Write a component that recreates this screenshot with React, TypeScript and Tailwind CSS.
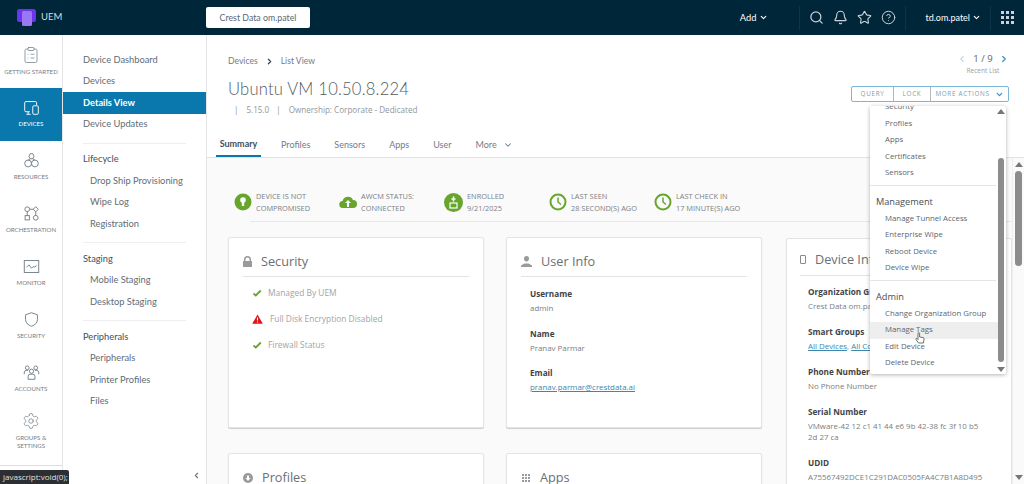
import {
  Bell,
  ChevronDown,
  ChevronLeft,
  ChevronRight,
  CircleHelp,
  ClipboardList,
  Search,
  Settings,
  Star,
} from 'lucide-react'
import type { ReactNode } from 'react'

const sans = "font-['Lato','Open_Sans',sans-serif]"
const body = "font-['Open_Sans',sans-serif]"

function RailIcon({ name }: { name: string }) {
  const common = {
    width: 17,
    height: 17,
    viewBox: '0 0 20 20',
    fill: 'none',
    stroke: 'currentColor',
    strokeWidth: 1.1,
  }
  if (name === 'devices')
    return (
      <svg {...common}>
        <path d="M8 15H3.500a1.500 1.500 0 0 1-1.500-1.500V4.500A1.500 1.500 0 0 1 3.500 3h11A1.500 1.500 0 0 1 16 4.500V7" />
        <rect x="11.500" y="8" width="6.500" height="10" rx="1.200" />
        <path d="M4 18h5M6 15v3" />
      </svg>
    )
  if (name === 'resources')
    return (
      <svg {...common}>
        <path d="M7 5l1.500-3h3L13 5l-1.500 3h-3z" />
        <circle cx="6" cy="13.500" r="4" />
        <circle cx="14" cy="13.500" r="4" />
        <path d="M6 9.500l2.500-1.500M14 9.500L11.500 8" />
      </svg>
    )
  if (name === 'orchestration')
    return (
      <svg {...common}>
        <circle cx="5" cy="5" r="2.800" />
        <path d="M15 2l3 3-3 3-3-3z" />
        <rect x="2.500" y="12.500" width="5" height="5" />
        <circle cx="15" cy="15" r="2.800" />
        <path d="M5 7.800v4.700M15 8v4.200M7.800 5H12" />
      </svg>
    )
  if (name === 'monitor')
    return (
      <svg {...common}>
        <rect x="1.500" y="3" width="17" height="14" />
        <path d="M4 11l3-3 3 4 2-2 1 1 3-2" />
      </svg>
    )
  if (name === 'security')
    return (
      <svg {...common}>
        <path d="M10 2l7 2.500V10c0 4-3 6.500-7 8-4-1.500-7-4-7-8V4.500z" />
      </svg>
    )
  if (name === 'accounts')
    return (
      <svg {...common}>
        <circle cx="10" cy="8.500" r="2.500" />
        <path d="M6 18v-3.500a2.500 2.500 0 0 1 2.500-2.500h3a2.500 2.500 0 0 1 2.500 2.500V18z" />
        <circle cx="5" cy="4.500" r="2.200" />
        <circle cx="15" cy="4.500" r="2.200" />
        <path d="M1.500 12V9.500A2.500 2.500 0 0 1 4 7.500h2M18.500 12V9.500A2.500 2.500 0 0 0 16 7.500h-2" />
      </svg>
    )
  return <Settings size={18} strokeWidth={1} />
}

function RailItem({
  label,
  icon,
  active,
  tight,
}: {
  label: string
  icon: ReactNode
  active?: boolean
  tight?: boolean
}) {
  return (
    <div
      className={`h-[53px] flex flex-col items-center shrink-0 ${
        tight ? 'pt-[6px]' : 'pt-[11px]'
      } ${active ? 'bg-[#0b78ad] text-white' : 'text-[#737d85]'}`}
    >
      {icon}
      <span
        className={`${sans} mt-[4px] text-[6.100px] leading-[8px] text-center whitespace-pre-line`}
      >
        {label}
      </span>
    </div>
  )
}

function SubLink({
  label,
  indent,
  active,
}: {
  label: string
  indent?: boolean
  active?: boolean
}) {
  return (
    <div
      className={`${sans} h-[21.500px] flex items-center text-[9.300px] ${
        indent ? 'pl-[27px]' : 'pl-[20px]'
      } ${active ? 'bg-[#0b78ad] text-white font-bold' : 'text-[#626c75]'}`}
    >
      {label}
    </div>
  )
}

function SubHeading({ label }: { label: string }) {
  return (
    <div className={`${sans} pl-[20px] h-[21.500px] flex items-center text-[9.300px] text-[#454f58]`}>
      {label}
    </div>
  )
}

function SubDivider() {
  return <div className="mx-[20px] h-px bg-[#eeeeee] mt-[7.500px] mb-[5px]" />
}

function StatusItem({
  icon,
  top,
  bottom,
}: {
  icon: ReactNode
  top: string
  bottom: string
}) {
  return (
    <div className="flex items-center gap-[4px] w-[105px] shrink-0">
      {icon}
      <div className={`${body} text-[7.400px] leading-[12px] text-[#7c8085]`}>
        <div>{top}</div>
        <div>{bottom}</div>
      </div>
    </div>
  )
}

function ClockIcon() {
  return (
    <svg width="18" height="18" viewBox="0 0 18 18" fill="none" stroke="#68a52d" strokeWidth="2">
      <circle cx="9" cy="9" r="7.500" />
      <path d="M9 4.500V9l3 2.500" strokeWidth="1.500" />
    </svg>
  )
}

function Card({
  title,
  icon,
  height,
  iconSlot,
  children,
}: {
  title: string
  icon: ReactNode
  height: string
  iconSlot: string
  children?: ReactNode
}) {
  return (
    <div
      className={`w-[256px] ${height} shrink-0 bg-white border border-[#e4e4e4] rounded-[2px] shadow-[0_1px_1px_rgba(0,0,0,0.18)] px-[14px]`}
    >
      <div className="h-[39px] pt-[9px] flex items-center gap-[9px] border-b border-[#e3e3e3]">
        <span className={`text-[#9a9a9a] ${iconSlot} flex justify-center`}>{icon}</span>
        <span className={`${body} text-[12.700px] text-[#6b6f73]`}>{title}</span>
      </div>
      {children}
    </div>
  )
}

function SecurityRow({ ok, label }: { ok: boolean; label: string }) {
  return (
    <div className="h-[26px] flex items-center pl-[9px]">
      {ok ? (
        <svg width="10" height="10" viewBox="0 0 10 10" className="mr-[6px]">
          <path d="M1.500 5.500l2.300 2 5-5" fill="none" stroke="#68a52d" strokeWidth="1.800" />
        </svg>
      ) : (
        <svg width="11" height="10" viewBox="0 0 11 10" className="mr-[7px]">
          <path d="M5.500 0.500L10.800 9.800H.2z" fill="#e0121a" />
          <path d="M5.500 3.500v3M5.500 7.500v1" stroke="#fff" strokeWidth="1.100" />
        </svg>
      )}
      <span className={`${body} text-[8.400px] text-[#a0a4a8]`}>{label}</span>
    </div>
  )
}

function Field({
  label,
  children,
  gap,
}: {
  label: string
  children: ReactNode
  gap: string
}) {
  return (
    <div className={`${body} ${gap}`}>
      <div className="font-bold text-[8.200px] leading-[12px] text-[#3f4347] mb-[3px]">{label}</div>
      <div className="text-[7.900px] leading-[11px] text-[#7a7e82]">{children}</div>
    </div>
  )
}

function MenuLink({ label, hover }: { label: string; hover?: boolean }) {
  return (
    <div
      className={`${body} h-[16.500px] flex items-center pl-[15px] text-[7.800px] text-[#5c6670] ${
        hover ? 'bg-[#eeeeee] mr-[-2px]' : ''
      }`}
    >
      {label}
    </div>
  )
}

function MenuHeading({ label }: { label: string }) {
  return (
    <div className={`${body} h-[17px] flex items-center pl-[6px] text-[9.200px] text-[#454f58]`}>
      {label}
    </div>
  )
}

export default function App() {
  return (
    <div className={`${body} relative w-[1024px] h-[484px] overflow-hidden flex flex-col bg-white`}>
      <header className="h-[35px] shrink-0 bg-[#00263a] flex items-center text-white">
        <div className="w-[206px] flex items-center pl-[17px] shrink-0">
          <svg width="19" height="17" viewBox="0 0 19 17">
            <rect x="0" y="0" width="19" height="13" rx="2.500" fill="#6d34ee" />
            <rect x="5" y="2" width="10" height="15" rx="1.500" fill="#9a78f5" />
          </svg>
          <span className={`${sans} ml-[5px] text-[9.500px] text-[#d5dde2]`}>UEM</span>
        </div>
        <div className={`${sans} w-[104px] h-[21px] bg-white rounded-[2px] flex items-center justify-center text-[8.800px] text-[#5c6670]`}>
          Crest Data om.patel
        </div>
        <div className="flex-1" />
        <div className={`${sans} flex items-center text-[9.300px] mr-[31px]`}>
          Add <ChevronDown size={9} strokeWidth={3} className="ml-[3px]" />
        </div>
        <div className="w-px h-[24px] bg-[#0e3648]" />
        <div className="flex items-center gap-[9px] px-[9px] text-[#c9d2d8]">
          <Search size={15} strokeWidth={2} />
          <Bell size={15} strokeWidth={1.800} />
          <Star size={15} strokeWidth={1.800} />
          <CircleHelp size={15} strokeWidth={1.600} />
        </div>
        <div className="w-px h-[24px] bg-[#0e3648]" />
        <div className={`${sans} flex items-center text-[9px] pl-[19px] pr-[9px]`}>
          td.om.patel <ChevronDown size={9} strokeWidth={3} className="ml-[2px]" />
        </div>
        <div className="w-px h-[24px] bg-[#0e3648]" />
        <div className="grid grid-cols-3 gap-[2px] pl-[10px] pr-[10px]">
          {Array.from({ length: 9 }).map((_, i) => (
            <span key={i} className="w-[3px] h-[3px] bg-[#c9d2d8]" />
          ))}
        </div>
      </header>

      <div className="flex-1 min-h-0 flex">
        <aside className="w-[63px] shrink-0 border-r border-[#e6e6e6] bg-white flex flex-col">
          <RailItem label="GETTING STARTED" icon={<ClipboardList size={18} strokeWidth={1} />} />
          <RailItem active label="DEVICES" icon={<RailIcon name="devices" />} />
          <RailItem label="RESOURCES" icon={<RailIcon name="resources" />} />
          <RailItem label="ORCHESTRATION" icon={<RailIcon name="orchestration" />} />
          <RailItem label="MONITOR" icon={<RailIcon name="monitor" />} />
          <RailItem label="SECURITY" icon={<RailIcon name="security" />} />
          <RailItem label="ACCOUNTS" icon={<RailIcon name="accounts" />} />
          <RailItem tight label={'GROUPS &\nSETTINGS'} icon={<RailIcon name="settings" />} />
          <div className="border-t border-[#dddddd] mt-[6px]" />
        </aside>

        <nav className="w-[144px] shrink-0 border-r border-[#e6e6e6] bg-white pt-[14px] relative">
          <SubLink label="Device Dashboard" />
          <SubLink label="Devices" />
          <SubLink active label="Details View" />
          <SubLink label="Device Updates" />
          <SubDivider />
          <SubHeading label="Lifecycle" />
          <SubLink indent label="Drop Ship Provisioning" />
          <SubLink indent label="Wipe Log" />
          <SubLink indent label="Registration" />
          <SubDivider />
          <SubHeading label="Staging" />
          <SubLink indent label="Mobile Staging" />
          <SubLink indent label="Desktop Staging" />
          <SubDivider />
          <SubHeading label="Peripherals" />
          <SubLink indent label="Peripherals" />
          <SubLink indent label="Printer Profiles" />
          <SubLink indent label="Files" />
          <ChevronLeft size={9} strokeWidth={3} className="absolute right-[5px] bottom-[4px] text-[#6b7780]" />
        </nav>

        <main className="flex-1 min-w-0 flex flex-col overflow-hidden bg-[#fafafa]">
          <section className="h-[123px] shrink-0 bg-white border-b border-[#e3e3e3] flex flex-col pl-[21px] pr-[15px]">
            <div className="flex justify-between pt-[14px] h-[42px]">
              <div className={`${sans} flex items-center h-[24px] text-[8.600px] text-[#747c84]`}>
                Devices
                <ChevronRight size={9} strokeWidth={3.500} className="mx-[7px] text-[#3f4a52]" />
                List View
              </div>
              <div className="w-[52px] text-center mt-[3px]">
                <div className="flex items-center justify-between text-[9.500px] leading-[14px] text-[#5c6670]">
                  <ChevronLeft size={10} strokeWidth={2.500} className="text-[#a9cde6]" />
                  1 / 9
                  <ChevronRight size={10} strokeWidth={3} className="text-[#3d8fd0]" />
                </div>
                <div className="text-[6.500px] leading-[10px] text-[#9a9ea2]">Recent List</div>
              </div>
            </div>
            <div className="flex justify-between h-[25px]">
              <h1 className={`${sans} text-[16.600px] font-light leading-[25px] text-[#555b61] tracking-[0.2px]`}>
                Ubuntu VM 10.50.8.224
              </h1>
              <div className="flex h-[16px] mt-[9px] border border-[#79b7d6] rounded-[2px] text-[6.300px] tracking-[0.7px] text-[#7f9bb0] bg-white">
                <span className="w-[41px] flex items-center justify-center">QUERY</span>
                <span className="w-[37px] flex items-center justify-center border-l border-[#b7b7b7]">LOCK</span>
                <span className="w-[78px] flex items-center justify-center gap-[5px] border-l border-[#b7b7b7]">
                  MORE ACTIONS
                  <ChevronDown size={9} strokeWidth={3.500} className="text-[#3d8fd0]" />
                </span>
              </div>
            </div>
            <div className="text-[8.100px] leading-[12px] mt-[2px] text-[#93979b]">
              <span className="ml-[6px]">|</span>
              <span className="ml-[8px]">5.15.0</span>
              <span className="ml-[7px]">|</span>
              <span className="ml-[8px]">Ownership: Corporate - Dedicated</span>
            </div>
            <div className={`${sans} flex mt-auto ml-[-12px] text-[9px] text-[#747c84]`}>
              <span className="h-[27px] w-[45px] pt-[2px] flex items-center justify-center font-bold text-[#454f58] border-b-2 border-[#0b78ad]">
                Summary
              </span>
              <span className="h-[27px] pt-[2px] flex items-center ml-[20px]">Profiles</span>
              <span className="h-[27px] pt-[2px] flex items-center ml-[24px]">Sensors</span>
              <span className="h-[27px] pt-[2px] flex items-center ml-[24px]">Apps</span>
              <span className="h-[27px] pt-[2px] flex items-center ml-[24px]">User</span>
              <span className="h-[27px] pt-[2px] flex items-center ml-[24px]">
                More
                <ChevronDown size={10} strokeWidth={2.500} className="ml-[6px]" />
              </span>
            </div>
          </section>

          <div className="flex-1 min-h-0 pl-[21px] overflow-hidden">
            <div className="ml-[22px] h-[64px] pt-[32px] border-b border-[#e8e8e8]">
              <div className="flex ml-[-16px] items-center h-[24px]">
                <StatusItem
                  top="DEVICE IS NOT"
                  bottom="COMPROMISED"
                  icon={
                    <svg width="18" height="18" viewBox="0 0 18 18">
                      <circle cx="9" cy="9" r="8.500" fill="#68a52d" />
                      <circle cx="9" cy="7" r="2.800" fill="#fff" />
                      <path d="M7.800 8h2.400v5H7.800z" fill="#fff" />
                    </svg>
                  }
                />
                <StatusItem
                  top="AWCM STATUS:"
                  bottom="CONNECTED"
                  icon={
                    <svg width="18" height="14" viewBox="0 0 18 14">
                      <path d="M4 13a3.500 3.500 0 0 1-.4-7A5.500 5.500 0 0 1 14 5a4 4 0 0 1 0 8z" fill="#68a52d" />
                      <path d="M9 5L6 8h2v4h2V8h2z" fill="#fff" />
                    </svg>
                  }
                />
                <StatusItem
                  top="ENROLLED"
                  bottom="9/21/2025"
                  icon={
                    <svg width="19" height="19" viewBox="0 0 19 19">
                      <circle cx="9.500" cy="9.500" r="9.500" fill="#68a52d" />
                      <path d="M9.500 3.500v5M7.500 6h4" stroke="#fff" strokeWidth="1.500" />
                      <rect x="6" y="10" width="7" height="5" fill="none" stroke="#fff" strokeWidth="1.200" />
                    </svg>
                  }
                />
                <StatusItem top="LAST SEEN" bottom="28 SECOND(S) AGO" icon={<ClockIcon />} />
                <StatusItem top="LAST CHECK IN" bottom="17 MINUTE(S) AGO" icon={<ClockIcon />} />
              </div>
            </div>

            <div className="flex gap-[22px] mt-[15px]">
              <Card
                title="Security"
                height="h-[191px]"
                iconSlot="w-[9px]"
                icon={
                  <svg width="9" height="11" viewBox="0 0 9 11" fill="currentColor">
                    <path d="M1 5V3.500a3.500 3.500 0 0 1 7 0V5h1v6H0V5zm1.500 0h4V3.500a2 2 0 0 0-4 0z" />
                  </svg>
                }
              >
                <div className="pt-[3px]">
                  <SecurityRow ok label="Managed By UEM" />
                  <SecurityRow ok={false} label="Full Disk Encryption Disabled" />
                  <SecurityRow ok label="Firewall Status" />
                </div>
              </Card>
              <Card
                title="User Info"
                height="h-[191px]"
                iconSlot="w-[11px]"
                icon={
                  <svg width="11" height="11" viewBox="0 0 11 11" fill="currentColor">
                    <path d="M3 2.500a2.500 2.500 0 0 1 5 0c0 1.500-.6 3-2.500 3S3 4 3 2.500zM0 11V9.500l3.500-2h4l3.500 2V11z" />
                  </svg>
                }
              >
                <div className="pt-[11px] pl-[9px]">
                  <Field label="Username" gap="mb-[13.500px]">admin</Field>
                  <Field label="Name" gap="mb-[13.500px]">Pranav Parmar</Field>
                  <Field label="Email" gap="mb-0">
                    <span className="text-[#3c87ae] underline">pranav.parmar@crestdata.ai</span>
                  </Field>
                </div>
              </Card>
            </div>

            <div className="flex gap-[22px] mt-[25px]">
              <Card
                title="Profiles"
                height="h-[80px]"
                iconSlot="w-[10px]"
                icon={
                  <svg width="10" height="10" viewBox="0 0 10 10" fill="currentColor">
                    <circle cx="5" cy="5" r="5" />
                    <path d="M5 8L2.500 5H4V2.500h2V5h1.500z" fill="#fff" />
                  </svg>
                }
              />
              <Card
                title="Apps"
                height="h-[80px]"
                iconSlot="w-[10px]"
                icon={
                  <span className="grid grid-cols-3 gap-[1px]">
                    {Array.from({ length: 9 }).map((_, i) => (
                      <span key={i} className="w-[2px] h-[2px] bg-[#9a9a9a]" />
                    ))}
                  </span>
                }
              />
            </div>
          </div>
        </main>
      </div>

      {/* device info card is cut by the page scrollbar */}
      <div className="absolute left-[786px] top-[238px] w-[226px] h-[260px] bg-white border border-[#e4e4e4] rounded-[2px] shadow-[0_1px_1px_rgba(0,0,0,0.18)] px-[13px]">
        <div className="h-[37px] pt-[5px] flex items-center gap-[9px] border-b border-[#e3e3e3]">
          <span className="w-[6px] h-[9px] border border-[#8a8a8a] rounded-[1px]" />
          <span className="text-[12.700px] text-[#6b6f73]">Device Info</span>
        </div>
        <div className="pt-[10px] pl-[8px] pr-[10px]">
          <Field label="Organization Group" gap="mb-[14px]">Crest Data om.patel</Field>
          <Field label="Smart Groups" gap="mb-[14px]">
            <span className="text-[#3c87ae] underline">All Devices</span>,{' '}
            <span className="text-[#3c87ae] underline">All Corporate</span>
          </Field>
          <Field label="Phone Number" gap="mb-[14px]">No Phone Number</Field>
          <Field label="Serial Number" gap="mb-[14px]">
            VMware-42 12 c1 41 44 e6 9b 42-38 fc 3f 10 b5 2d 27 ca
          </Field>
          <Field label="UDID" gap="mb-0">A75567492DCE1C291DAC0505FA4C7B1A8D495</Field>
        </div>
      </div>

      {/* page scrollbar */}
      <div className="absolute right-0 top-[158px] bottom-0 w-[12px] bg-[#fafafa] border-l border-[#eeeeee]">
        <div className="absolute top-[4px] left-[2px] w-0 h-0 border-x-[4px] border-x-transparent border-b-[5px] border-b-[#777777]" />
        <div className="absolute top-[13px] left-[2px] w-[7px] h-[95px] rounded-[4px] bg-[#8c8c8c]" />
        <div className="absolute bottom-[4px] left-[2px] w-0 h-0 border-x-[4px] border-x-transparent border-t-[5px] border-t-[#777777]" />
      </div>

      {/* more actions dropdown */}
      <div className="absolute left-[870px] top-[106px] w-[136px] h-[268px] bg-white rounded-[2px] shadow-[0_1px_4px_rgba(0,0,0,0.3)] overflow-hidden">
        <div className="mt-[-7px] pr-[10px]">
          <MenuLink label="Security" />
          <MenuLink label="Profiles" />
          <MenuLink label="Apps" />
          <MenuLink label="Certificates" />
          <MenuLink label="Sensors" />
          <div className="h-px bg-[#e4e4e4] mt-[3px] mb-[8px]" />
          <MenuHeading label="Management" />
          <MenuLink label="Manage Tunnel Access" />
          <MenuLink label="Enterprise Wipe" />
          <MenuLink label="Reboot Device" />
          <MenuLink label="Device Wipe" />
          <div className="h-px bg-[#e4e4e4] mt-[3px] mb-[8px]" />
          <MenuHeading label="Admin" />
          <MenuLink label="Change Organization Group" />
          <MenuLink hover label="Manage Tags" />
          <MenuLink label="Edit Device" />
          <MenuLink label="Delete Device" />
        </div>
        <div className="absolute top-[3px] right-[1px] w-0 h-0 border-x-[4px] border-x-transparent border-b-[5px] border-b-[#777777]" />
        <div className="absolute top-[52px] right-[2px] w-[6px] h-[204px] rounded-[3px] bg-[#8c8c8c]" />
        <div className="absolute bottom-[2px] right-[1px] w-0 h-0 border-x-[4px] border-x-transparent border-t-[5px] border-t-[#777777]" />
        <svg width="10" height="12" viewBox="0 0 10 12" className="absolute left-[45px] top-[226px]">
          <path d="M3 1.500a.8.8 0 0 1 1.600 0V5l3.500.6c.6.1 1 .6.9 1.200L8.500 11H3.500L1 7.500c-.5-1 .7-1.500 1.200-.8L3 7.500z" fill="#fff" stroke="#333" strokeWidth=".7" />
        </svg>
      </div>

      {/* status bar link tooltip */}
      <div className="absolute left-0 bottom-0 h-[14px] w-[69px] bg-[#2b2f33] rounded-tr-[2px] flex items-center pl-[3px] text-[8px] text-[#e0e0e0]">
        javascript:void(0);
      </div>
    </div>
  )
}
